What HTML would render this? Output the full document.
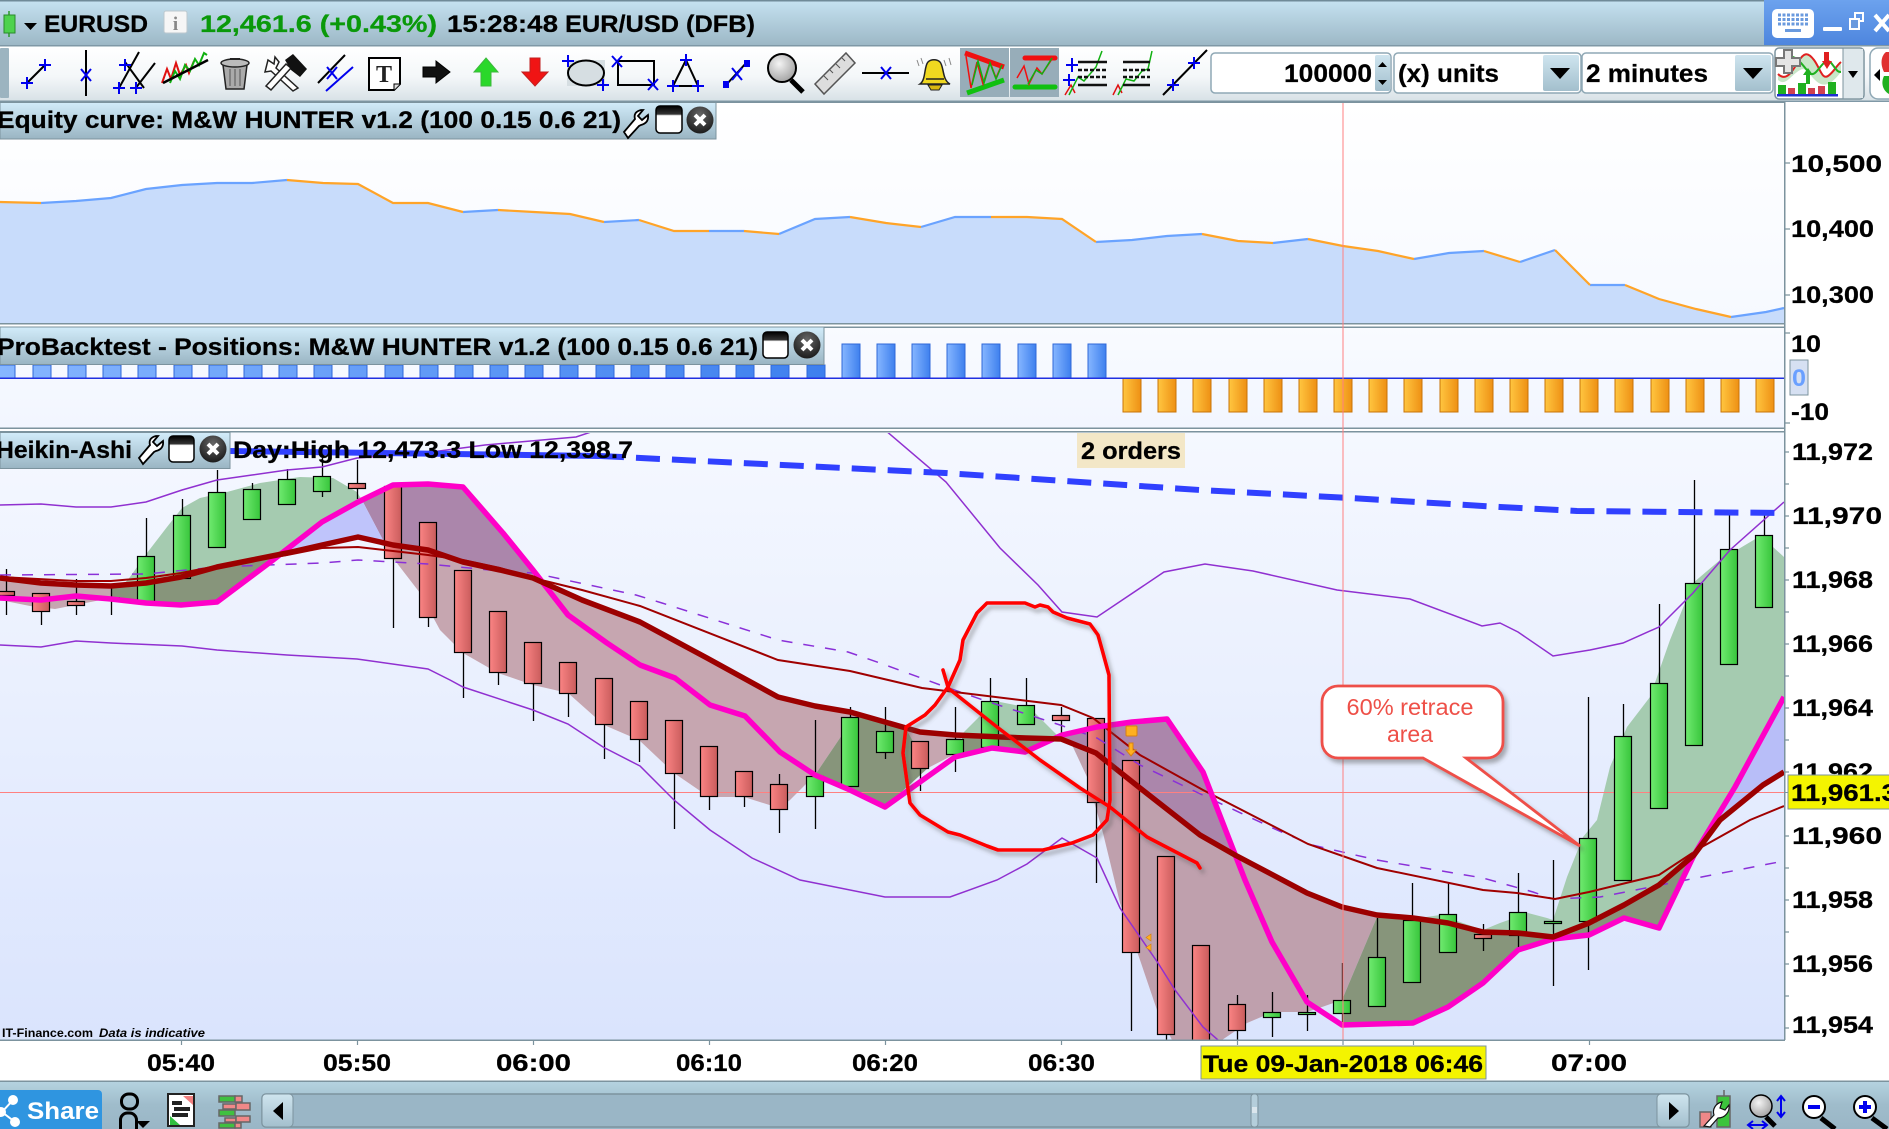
<!DOCTYPE html>
<html lang="en">
<head>
<meta charset="utf-8">
<title>EURUSD chart</title>
<style>
html,body{margin:0;padding:0;background:#fff;width:1889px;height:1129px;overflow:hidden}
svg{display:block}
text{font-family:"Liberation Sans",Arial,sans-serif}
.b{font-weight:bold;font-size:24px;fill:#000;stroke:#000;stroke-width:.25}
.ax{font-weight:bold;font-size:24px;fill:#000;stroke:#000;stroke-width:.25}
.bl{stroke:#0000ee;stroke-width:2;fill:none}
.k{stroke:#000;stroke-width:2;fill:none}
</style>
</head>
<body>
<svg width="1889" height="1129" viewBox="0 0 1889 1129" xmlns="http://www.w3.org/2000/svg">
<defs>
<linearGradient id="hd" x1="0" y1="0" x2="0" y2="1"><stop offset="0" stop-color="#c5e2f1"/><stop offset="1" stop-color="#9cb7c5"/></linearGradient>
<linearGradient id="tb" x1="0" y1="0" x2="0" y2="1"><stop offset="0" stop-color="#ffffff"/><stop offset=".55" stop-color="#f4f7f9"/><stop offset="1" stop-color="#d7e1e6"/></linearGradient>
<linearGradient id="tt" x1="0" y1="0" x2="0" y2="1"><stop offset="0" stop-color="#d2ecfa"/><stop offset="1" stop-color="#9ab5c3"/></linearGradient>
<linearGradient id="eq" x1="0" y1="0" x2="0" y2="1"><stop offset="0" stop-color="#ffffff"/><stop offset="1" stop-color="#f6f9ff"/></linearGradient>
<linearGradient id="bt" x1="0" y1="0" x2="0" y2="1"><stop offset="0" stop-color="#f9fbff"/><stop offset="1" stop-color="#f2f6ff"/></linearGradient>
<linearGradient id="ha" x1="0" y1="0" x2="0" y2="1"><stop offset="0" stop-color="#f5f8ff"/><stop offset="1" stop-color="#dae4fd"/></linearGradient>
<linearGradient id="rd"><stop offset="0" stop-color="#fb8484"/><stop offset="1" stop-color="#c95c5c"/></linearGradient>
<linearGradient id="gn"><stop offset="0" stop-color="#70ea70"/><stop offset="1" stop-color="#38c63c"/></linearGradient>
<linearGradient id="bb"><stop offset="0" stop-color="#86b6ff"/><stop offset="1" stop-color="#3e80ee"/></linearGradient>
<linearGradient id="ob"><stop offset="0" stop-color="#ffc640"/><stop offset="1" stop-color="#ee9014"/></linearGradient>
<linearGradient id="bot" x1="0" y1="0" x2="0" y2="1"><stop offset="0" stop-color="#b5d3e0"/><stop offset=".5" stop-color="#9fbccb"/><stop offset="1" stop-color="#9ab6c6"/></linearGradient>
<linearGradient id="btn" x1="0" y1="0" x2="0" y2="1"><stop offset="0" stop-color="#cfe5ef"/><stop offset="1" stop-color="#a3bfcd"/></linearGradient>
<linearGradient id="blu" x1="0" y1="0" x2="0" y2="1"><stop offset="0" stop-color="#6ca2ee"/><stop offset="1" stop-color="#4e86de"/></linearGradient>
<linearGradient id="wn" x1="0" y1="0" x2="0" y2="1"><stop offset="0" stop-color="#000"/><stop offset=".3" stop-color="#333"/><stop offset=".36" stop-color="#fff"/><stop offset="1" stop-color="#fff"/></linearGradient>
<radialGradient id="cl" cx=".5" cy=".3" r=".8"><stop offset="0" stop-color="#666"/><stop offset="1" stop-color="#111"/></radialGradient>
<radialGradient id="lens" cx=".4" cy=".35" r=".75"><stop offset="0" stop-color="#f4f4f4"/><stop offset="1" stop-color="#999"/></radialGradient>
<clipPath id="cp"><rect x="0" y="433" width="1784" height="607"/></clipPath>
<filter id="sh" x="-10%" y="-10%" width="125%" height="125%"><feDropShadow dx="3" dy="4" stdDeviation="2" flood-color="#555" flood-opacity=".45"/></filter>
</defs>

<!-- header -->
<rect width="1889" height="46" fill="url(#hd)"/>
<rect width="1889" height="1.5" fill="#6f8a98"/>
<rect y="45" width="1889" height="1.5" fill="#7f98a6"/>
<path d="M9 11V37" stroke="#2a9a2a" stroke-width="1.5"/>
<rect x="4" y="15" width="11" height="18" fill="#4ed24e" stroke="#2a8a2a"/>
<path d="M24 23h13l-6.500 7z" fill="#000"/>
<text class="b" x="44" y="32" textLength="104" lengthAdjust="spacingAndGlyphs">EURUSD</text>
<rect x="164" y="11" width="23" height="22" rx="2" fill="#f6f6f6" stroke="#bcc8ce"/>
<text x="175.500" y="30" text-anchor="middle" style="font:bold 19px 'Liberation Serif',serif" fill="#888">i</text>
<text class="b" x="200" y="32" textLength="237" lengthAdjust="spacingAndGlyphs" style="fill:#0a990a;stroke:#0a990a">12,461.6 (+0.43%)</text>
<text class="b" x="447" y="32" textLength="111" lengthAdjust="spacingAndGlyphs">15:28:48</text>
<text class="b" x="565" y="32" textLength="190" lengthAdjust="spacingAndGlyphs">EUR/USD (DFB)</text>
<rect x="1764" y="0" width="125" height="45" fill="url(#blu)"/>
<rect x="1772" y="9" width="42" height="29" rx="5" fill="#fff"/>
<path d="M1778 15h30M1778 19.500h30M1778 24h30" stroke="#6a9ade" stroke-width="3" stroke-dasharray="3 1.500"/>
<rect x="1785" y="29" width="16" height="3" fill="#6a9ade"/>
<rect x="1823" y="27" width="19" height="4" rx="1" fill="#fff"/>
<rect x="1855" y="13" width="8" height="8" fill="none" stroke="#fff" stroke-width="2"/>
<rect x="1850" y="19" width="9" height="10" fill="#6a9ade" stroke="#fff" stroke-width="2"/>
<path d="M1875 15l14 16M1889 15l-14 16" stroke="#fff" stroke-width="4"/>

<!-- toolbar -->
<rect y="46.500" width="1889" height="55" fill="url(#tb)"/>
<rect y="100.500" width="1889" height="1.500" fill="#7f98a6"/>
<rect x="0" y="48" width="9" height="50" rx="1" fill="#9cb4c0"/>
<!-- 1 -->
<path class="k" d="M27 83L45 65"/><path class="bl" d="M21 83h12M27 77v12M39 65h12M45 59v12"/>
<!-- 2 -->
<path class="k" d="M86 50V96"/><path class="bl" d="M81 69l10 12M91 69l-10 12"/>
<!-- 3 -->
<path class="k" d="M139 52L119 88M155 63L135 89M125 62L144 88"/><path class="bl" d="M119 65h12M125 59v12M113 88h12M119 82v12M130 88h12M136 82v12"/>
<!-- 4 -->
<path d="M162 83l5-14 4 10 5-16 4 12 6-10 3 8 5-12" stroke="#e01010" stroke-width="2" fill="none"/>
<path d="M170 83l5-12 5 8 5-14 5 6 5-12 4 6 5-12 3 2" stroke="#10b010" stroke-width="2" fill="none"/>
<path d="M163 83L208 60" stroke="#000" stroke-width="2.500"/>
<!-- 5 trash -->
<path d="M223 65h24l-3 24h-18z" fill="#aaa" stroke="#222" stroke-width="1.500"/>
<ellipse cx="235" cy="63" rx="14" ry="4" fill="#bbb" stroke="#222" stroke-width="1.500"/>
<path d="M230 59h10" stroke="#222" stroke-width="2"/>
<path d="M230 69v17M235 69v17M240 69v17" stroke="#555"/>
<!-- 6 tools -->
<path d="M268 60l6 4 1-7 4 5-3 6 22 20-5 3-22-20-6 1z" fill="#fff" stroke="#222" stroke-width="1.500"/>
<path d="M266 86l20-22 5 4-20 22z" fill="#fff" stroke="#222" stroke-width="1.500"/>
<path d="M285 60l8-6 14 15-7 8-9-7z" fill="#111"/>
<!-- 7 -->
<path class="k" d="M345 55L318 83"/><path d="M353 67L326 91" stroke="#0000ee" stroke-width="2"/><path class="bl" d="M327 67l10 12M337 67l-10 12"/>
<!-- 8 T -->
<path d="M369 58h31v26l-6 6h-25z" fill="#fff" stroke="#000" stroke-width="2"/>
<path d="M394 90v-6h6" fill="#ddd" stroke="#000"/>
<text x="384" y="82" text-anchor="middle" style="font:bold 24px 'Liberation Serif',serif" fill="#222">T</text>
<!-- 9-11 arrows -->
<path d="M423 67h13v-6l14 11-14 11v-6h-13z" fill="#111" stroke="#000"/>
<path d="M486 58l12 14h-7v14h-10V72h-7z" fill="#2ad82a" stroke="#3cb83c"/>
<path d="M535 86l13-14h-8V58h-10v14h-8z" fill="#f01414" stroke="#c02020"/>
<!-- 12 -->
<rect x="567" y="60" width="38" height="26" fill="#d6dee2"/>
<ellipse cx="586" cy="73" rx="18" ry="12.500" fill="none" stroke="#000" stroke-width="2"/>
<path class="bl" d="M562 61h12M568 55v12M597 85h12M603 79v12"/>
<!-- 13 -->
<rect x="618" y="61" width="36" height="24" fill="none" stroke="#000" stroke-width="2"/>
<path class="bl" d="M612 56l10 11M622 56l-10 11M648 79l10 11M658 79l-10 11"/>
<!-- 14 -->
<path class="k" d="M686 60L673 86H698Z"/><path class="bl" d="M680 60h12M686 54v12M667 86h12M673 80v12M692 86h12M698 80v12"/>
<!-- 15 -->
<path class="k" d="M726 85L747 62"/><rect x="723" y="81" width="6" height="7" fill="#0000ee"/><rect x="744" y="60" width="6" height="7" fill="#0000ee"/><path class="bl" d="M732 68l10 12M742 68l-10 12"/>
<!-- 16 magnifier -->
<path d="M791 80L803 92" stroke="#000" stroke-width="5"/>
<circle cx="782" cy="68" r="14" fill="url(#lens)" stroke="#000" stroke-width="2"/>
<!-- 17 ruler -->
<path d="M846 53l9 10-31 31-9-10z" fill="#ddd" stroke="#555" stroke-width="1.500"/>
<path d="M842 58l3 3M836 64l4 4M830 70l3 3M824 76l4 4" stroke="#555"/>
<!-- 18 -->
<path class="k" d="M862 73H909"/><path class="bl" d="M881 67l10 12M891 67l-10 12"/>
<!-- 19 bell -->
<path d="M920 84c6-4 4-18 8-22 3-3 9-3 12 0 4 4 2 18 10 22z" fill="#f0d820" stroke="#222" stroke-width="1.500"/>
<path d="M928 85h14l-3 5h-8z" fill="#d8b810" stroke="#222"/>
<path d="M926 79h18" stroke="#222" stroke-width="1.500"/>
<path d="M917 60l2 6M921 58l2 6M944 60l2 6M949 58l2 7" stroke="#888"/>
<!-- 20, 21 -->
<rect x="960" y="48" width="49" height="49" fill="#97adb9"/>
<path d="M965 53L1004 67" stroke="#f01010" stroke-width="5"/>
<path d="M967 93L1004 80" stroke="#10c010" stroke-width="5"/>
<path d="M966 56l5 32 6-26 6 22 7-22 6 16 6-14" stroke="#f01010" stroke-width="1.500" fill="none"/>
<path d="M972 85l6-24 6 22 6-20 6 16 6-14" stroke="#10b010" stroke-width="1.500" fill="none"/>
<rect x="1010" y="48" width="49" height="49" fill="#97adb9"/>
<path d="M1025 58h30" stroke="#f01010" stroke-width="5" stroke-linecap="round"/>
<path d="M1015 87h40" stroke="#10c010" stroke-width="5" stroke-linecap="round"/>
<path d="M1017 78l7-12 5 18 8-16 5 6 12-18" stroke="#f01010" stroke-width="1.500" fill="none"/>
<path d="M1028 84l8-14 6 4 10-16" stroke="#10b010" stroke-width="1.500" fill="none"/>
<!-- 22, 23 -->
<path d="M1065 95l6-10 4 8" stroke="#e01010" stroke-width="1.500" fill="none"/>
<path d="M1069 95l9-18 6 4 12-14 6-16" stroke="#10b010" stroke-width="1.500" fill="none"/>
<path d="M1078 62h29M1078 85h29" stroke="#111" stroke-width="2.500"/>
<path d="M1078 70h29M1078 77h29" stroke="#111" stroke-width="2.500" stroke-dasharray="4 2"/>
<path class="bl" d="M1066 65h12M1072 58v14M1063 80h12M1069 74v12"/>
<path d="M1113 95l5-10 4 8" stroke="#e01010" stroke-width="1.500" fill="none"/>
<path d="M1118 95l8-16 8 2 8-10 6-2 4-18" stroke="#10b010" stroke-width="1.500" fill="none"/>
<path d="M1123 62h27M1123 85h27" stroke="#111" stroke-width="2.500"/>
<path d="M1123 70h27M1123 77h27" stroke="#111" stroke-width="2.500" stroke-dasharray="4 2"/>
<!-- 24 -->
<path class="k" d="M1163 95L1207 50"/><path class="bl" d="M1188 63h12M1194 57v12M1167 85h12M1173 79v12"/>
<!-- inputs -->
<rect x="1211" y="53" width="180" height="40" rx="4" fill="#fff" stroke="#8fa8b5" stroke-width="1.500"/>
<text class="b" x="1284" y="82" textLength="88" lengthAdjust="spacingAndGlyphs" style="font-size:25px">100000</text>
<rect x="1375" y="55" width="15" height="36" rx="2" fill="url(#btn)"/>
<path d="M1378 67l4.500-5 4.500 5zM1378 80l4.500 5 4.500-5z" fill="#000"/>
<rect x="1394" y="53" width="187" height="40" rx="4" fill="#fff" stroke="#8fa8b5" stroke-width="1.500"/>
<text class="b" x="1398" y="82" textLength="101" lengthAdjust="spacingAndGlyphs" style="font-size:25px">(x) units</text>
<rect x="1543" y="55" width="36" height="36" rx="2" fill="url(#btn)"/>
<path d="M1550 68h20l-10 11z" fill="#000"/>
<rect x="1582" y="53" width="191" height="40" rx="4" fill="#fff" stroke="#8fa8b5" stroke-width="1.500"/>
<text class="b" x="1586" y="82" textLength="122" lengthAdjust="spacingAndGlyphs" style="font-size:25px">2 minutes</text>
<rect x="1735" y="55" width="36" height="36" rx="2" fill="url(#btn)"/>
<path d="M1743 68h20l-10 11z" fill="#000"/>
<!-- indicator icon -->
<rect x="1775" y="48" width="89" height="51" rx="4" fill="#fff" stroke="#7c939e" stroke-width="1.500"/>
<rect x="1843" y="49" width="20" height="49" fill="#dfe8ec"/>
<path d="M1843 48.500v50" stroke="#7c939e"/>
<path d="M1778 74c8 8 14-2 20-12s10-10 16-2 8 20 14 16 8-10 13-14v10c-8 10-16 18-26 8s-10-14-18-8-12 14-19 8z" fill="#c8e6c8"/>
<path d="M1778 74c8 8 14-2 20-12s10-10 16-2 8 20 14 16 8-10 13-14" stroke="#e02020" stroke-width="2" fill="none"/>
<path d="M1778 66c8-12 14-12 22-4s10 16 16 10 10-16 16-8 6 8 9 8" stroke="#20b020" stroke-width="2" fill="none"/>
<path d="M1784 50h8v8h8v8h-8v7h-8v-7h-8v-8h8z" fill="#e4e4e4" stroke="#777" stroke-width="2"/>
<path d="M1808 68l5 7h-3v9h-4v-9h-3z" fill="#20b020"/>
<path d="M1824 52h5v9h3l-5 8-5-8h2z" fill="#e02020"/>
<rect x="1778" y="85" width="8" height="9" fill="#20b020"/><rect x="1788" y="88" width="7" height="6" fill="#d04050"/><rect x="1798" y="83" width="8" height="11" fill="#20b020"/><rect x="1808" y="88" width="7" height="6" fill="#d04050"/><rect x="1818" y="86" width="7" height="8" fill="#d04050"/><rect x="1828" y="82" width="8" height="12" fill="#20b020"/>
<rect x="1777" y="94" width="61" height="2.500" fill="#2030d0"/>
<path d="M1848 71h10l-5 7z" fill="#000"/>
<rect x="1870" y="48" width="30" height="51" rx="8" fill="#fff" stroke="#8fa8b5" stroke-width="1.500"/>
<path d="M1874 75l6-6v12z" fill="#000"/>
<path d="M1886 52c-5 4-6 12-2 20h5V52z" fill="#e03030"/><path d="M1884 76c-3 6-2 14 5 18V76z" fill="#20b020"/>

<!-- Equity panel -->
<rect x="0" y="102" width="1784" height="222" fill="url(#eq)"/>
<path fill="#c8dcfb" d="M0 202L41 203 76 201 111 198 146 189 182 185 217 183 252 183 287 180 323 183 358 184 393 203 428 203 463 212 498 210 534 212 570 214 604 222 639 220 674 231 709 231 744 231 779 234 815 219 850 217 886 223 921 227 955 217 991 217 1027 217 1062 219 1096 242 1132 240 1167 236 1202 234 1238 241 1273 243 1308 239 1343 246 1378 251 1414 259 1449 253 1484 251 1520 262 1555 250 1590 285 1625 285 1659 299 1696 309 1731 317 1766 312 1784 308V324H0Z"/>
<path fill="none" stroke="#6aa3ff" stroke-width="2.200" d="M41 203L76 201 111 198 146 189 182 185 217 183 252 183 287 180M463 212L498 210M604 222L639 220M709 231L744 231M779 234L815 219 850 217M921 227L955 217 991 217M1096 242L1132 240 1167 236 1202 234M1273 243L1308 239M1414 259L1449 253 1484 251M1520 262L1555 250M1590 285L1625 285M1731 317L1766 312 1784 308"/>
<path fill="none" stroke="#ffa428" stroke-width="2.200" d="M0 202L41 203M287 180L323 183 358 184 393 203 428 203 463 212M498 210L534 212 570 214 604 222M639 220L674 231 709 231M744 231L779 234M850 217L886 223 921 227M991 217L1027 217 1062 219 1096 242M1202 234L1238 241 1273 243M1308 239L1343 246 1378 251 1414 259M1484 251L1520 262M1555 250L1590 285M1625 285L1659 299 1696 309 1731 317"/>
<rect x="0" y="323" width="1785" height="1.500" fill="#7c939e"/>
<rect x="0" y="102" width="716" height="37" fill="url(#tt)" stroke="#7c939e"/>
<text class="b" x="-3" y="128" textLength="624" lengthAdjust="spacingAndGlyphs">Equity curve: M&amp;W HUNTER v1.2 (100 0.15 0.6 21)</text>
<g transform="translate(485,-326)"><path d="M139 458L150 445Q148 438 156 436L158 436 153 442 157 446 163 441Q164 449 156 451L154 452 143 464Z" fill="#fff" stroke="#000" stroke-width="1.800"/></g>
<rect x="656" y="106" width="26" height="27" rx="4" fill="url(#wn)" stroke="#000" stroke-width="1.500"/>
<circle cx="700" cy="120" r="13.500" fill="url(#cl)"/><path d="M695 115l10 10M705 115l-10 10" stroke="#fff" stroke-width="4"/>

<!-- Backtest panel -->
<rect x="0" y="327" width="1784" height="101" fill="url(#bt)"/>
<rect x="0" y="326.500" width="1785" height="1.500" fill="#7c939e"/>
<rect x="0" y="427.500" width="1785" height="1.500" fill="#7c939e"/>
<g fill="url(#bb)" stroke="#2f68d8">
<path d="M-3 365h18v13H-3zM33 365h18v13H33zM68 365h18v13H68zM103 365h18v13h-18zM138 365h18v13h-18zM174 365h18v13h-18zM209 365h18v13h-18zM244 365h18v13h-18zM279 365h18v13h-18zM314 365h18v13h-18zM349 365h18v13h-18zM385 365h18v13h-18zM420 365h18v13h-18zM455 365h18v13h-18zM490 365h18v13h-18zM525 365h18v13h-18zM560 365h18v13h-18zM596 365h18v13h-18zM631 365h18v13h-18zM666 365h18v13h-18zM701 365h18v13h-18zM736 365h18v13h-18zM771 365h18v13h-18zM807 365h18v13h-18z"/>
<rect x="842" y="344" width="18" height="34"/><rect x="877" y="344" width="18" height="34"/><rect x="912" y="344" width="18" height="34"/><rect x="947" y="344" width="18" height="34"/><rect x="982" y="344" width="18" height="34"/><rect x="1018" y="344" width="18" height="34"/><rect x="1053" y="344" width="18" height="34"/><rect x="1088" y="344" width="18" height="34"/>
</g>
<g fill="url(#ob)" stroke="#c87408">
<rect x="1123" y="378" width="18" height="34"/><rect x="1158" y="378" width="18" height="34"/><rect x="1193" y="378" width="18" height="34"/><rect x="1229" y="378" width="18" height="34"/><rect x="1264" y="378" width="18" height="34"/><rect x="1299" y="378" width="18" height="34"/><rect x="1334" y="378" width="18" height="34"/><rect x="1369" y="378" width="18" height="34"/><rect x="1404" y="378" width="18" height="34"/><rect x="1440" y="378" width="18" height="34"/><rect x="1475" y="378" width="18" height="34"/><rect x="1510" y="378" width="18" height="34"/><rect x="1545" y="378" width="18" height="34"/><rect x="1580" y="378" width="18" height="34"/><rect x="1615" y="378" width="18" height="34"/><rect x="1651" y="378" width="18" height="34"/><rect x="1686" y="378" width="18" height="34"/><rect x="1721" y="378" width="18" height="34"/><rect x="1756" y="378" width="18" height="34"/>
</g>
<rect x="0" y="377.500" width="1784" height="1.500" fill="#2030e0"/>
<rect x="0" y="327" width="824" height="37.500" fill="url(#tt)" stroke="#7c939e"/>
<text class="b" x="-3" y="355" textLength="761" lengthAdjust="spacingAndGlyphs">ProBacktest - Positions: M&amp;W HUNTER v1.2 (100 0.15 0.6 21)</text>
<rect x="763" y="332" width="25" height="26" rx="4" fill="url(#wn)" stroke="#000" stroke-width="1.500"/>
<circle cx="807" cy="345" r="13.500" fill="url(#cl)"/><path d="M802 340l10 10M812 340l-10 10" stroke="#fff" stroke-width="4"/>

<!-- Heikin panel -->
<rect x="0" y="432" width="1784" height="608" fill="url(#ha)"/>
<g clip-path="url(#cp)">
<!-- red fills -->
<path fill="#c6a6b0" d="M0 579L41 583 76 585 111 586V598L55 609 30 606 0 600Z"/>
<path fill="#c6a6b0" d="M383 541L393 545 428 550 463 562 500 570 533 578 582 600 640 622 707 658 778 697 815 706 850 712 860 716 842 735 815 775 790 800 779 808 744 797 709 797 674 773 639 740 604 725 568 693 533 685 498 673 463 653 440 630 420 593 393 558Z"/>
<path fill="#c6a6b0" d="M905 727L920 732 963 734 953 755 928 768Z"/>
<path fill="#bfa0ad" d="M1072 745L1096 753 1140 788 1200 835 1235 855 1273 875 1307 893 1342 907 1377 917 1342 1000 1322 1007 1307 1012 1273 1012 1247 1023 1222 1040 1172 1040 1157 1010 1140 960 1120 903 1103 833 1087 777Z"/>
<!-- light green -->
<path fill="#a5cbb0" d="M112 598L130 577 147 553 167 527 182 508 200 498 227 492 260 483 300 477 333 478 357 492 363 502 322 522 276 556 252 560 217 567 181 577 146 583 111 586Z"/>
<path fill="#a5cbb0" d="M962 734L983 713 1000 702 1030 708 1057 735 1061 739 1026 738 990 737Z"/>
<path fill="#a5cbb0" d="M1413 919L1440 915 1483 930 1500 923 1528 913 1547 918 1553 920 1567 877 1583 837 1597 820 1610 767 1627 727 1650 697 1670 640 1693 583 1720 560 1757 538 1773 547 1784 557V697L1735 787 1700 848 1659 885 1624 905 1589 923 1553 937 1518 933 1483 932 1448 923Z"/>
<!-- dark green -->
<path fill="#87957b" d="M111 586L146 583 181 577 217 567 252 560 276 556 217 602 181 605 146 603 111 599Z"/>
<path fill="#87957b" d="M815 775L842 735 860 716 885 722 905 727 928 768 885 807 850 790Z"/>
<path fill="#87957b" d="M963 735L1026 738 1061 739 1062 735 1025 752 992 748 955 757Z"/>
<path fill="#87957b" d="M1377 917L1413 918 1448 923 1483 932 1518 933 1553 937 1589 923 1624 905 1659 885 1700 848 1659 928 1624 918 1589 935 1553 939 1518 950 1483 983 1448 1007 1413 1023 1342 1025 1342 1000Z"/>
<!-- purple & blue -->
<path fill="#ab86ab" d="M363 502L393 485 428 484 463 487 503 533 533 570 533 578 500 570 463 562 428 550 393 545 383 540Z"/>
<path fill="#ab86ab" d="M1062 735L1097 727 1132 722 1167 719 1203 772 1236 855 1200 835 1140 788 1096 753 1061 739Z"/>
<path fill="#bfc4fb" d="M276 556L322 522 363 502 383 540 358 537 322 545Z"/>
<path fill="#b8bef8" d="M1700 848L1735 787 1784 697V772L1763 785 1720 820Z"/>

<!-- crosshair -->
<path d="M0 792.500H1784" stroke="#ff8080" stroke-width="1"/>

<!-- wicks -->
<path stroke="#000" stroke-width="1.300" fill="none" d="M6.500 569V615M41.500 611V625M76.500 579V615M111.500 588V615M146.500 518V556M182.500 499V515M217.500 470V492M252.500 483V489M287.500 469V479M322.500 458V497M357.500 460V499M393.500 558V628M428.500 617V627M463.500 652V698M498.500 672V685M533.500 683V721M568.500 693V717M604.500 724V759M639.500 739V762M674.500 773V829M709.500 796V810M744.500 796V807M779.500 774V833M815.500 720V829M850.500 707V717M885.500 707V759M920.500 768V791M955.500 707V772M990.500 678V701M1026.500 678V705M1061.500 707V734M1096.500 802V883M1131.500 952V1031M1166.500 1034V1040M1237.500 995V1040M1272.500 992V1037M1307.500 995V1031M1342.500 963V1026M1377.500 918V957M1412.500 883V920M1448.500 883V914M1483.500 924V951M1518.500 873V948M1553.500 860V986M1588.500 697V970M1623.500 704V736M1659.500 604V683M1694.500 480V583M1729.500 515V549M1764.500 512V535"/>
<!-- red bodies -->
<g fill="url(#rd)" stroke="#000" stroke-width="1.200">
<rect x="-2.500" y="591.500" width="17" height="4"/><rect x="32.500" y="593.500" width="17" height="18"/><rect x="67.500" y="601.500" width="17" height="4"/><rect x="348.500" y="483.500" width="17" height="5"/><rect x="384.500" y="486.500" width="17" height="72"/><rect x="419.500" y="522.500" width="17" height="95"/><rect x="454.500" y="570.500" width="17" height="82"/><rect x="489.500" y="611.500" width="17" height="61"/><rect x="524.500" y="642.500" width="17" height="41"/><rect x="559.500" y="662.500" width="17" height="31"/><rect x="595.500" y="678.500" width="17" height="46"/><rect x="630.500" y="701.500" width="17" height="38"/><rect x="665.500" y="720.500" width="17" height="53"/><rect x="700.500" y="746.500" width="17" height="50"/><rect x="735.500" y="771.500" width="17" height="25"/><rect x="770.500" y="784.500" width="17" height="25"/><rect x="911.500" y="741.500" width="17" height="27"/><rect x="1052.500" y="715.500" width="17" height="5"/><rect x="1087.500" y="718.500" width="17" height="84"/><rect x="1122.500" y="760.500" width="17" height="192"/><rect x="1157.500" y="856.500" width="17" height="178"/><rect x="1192.500" y="945.500" width="17" height="100"/><rect x="1228.500" y="1004.500" width="17" height="26"/><rect x="1474.500" y="934.500" width="17" height="4"/>
</g>
<path d="M103 598h17" stroke="#000" stroke-width="1.500"/>
<!-- green bodies -->
<g fill="url(#gn)" stroke="#000" stroke-width="1.200">
<rect x="137.500" y="556.500" width="17" height="45"/><rect x="173.500" y="515.500" width="17" height="63"/><rect x="208.500" y="492.500" width="17" height="55"/><rect x="243.500" y="489.500" width="17" height="30"/><rect x="278.500" y="479.500" width="17" height="25"/><rect x="313.500" y="476.500" width="17" height="15"/><rect x="806.500" y="776.500" width="17" height="20"/><rect x="841.500" y="717.500" width="17" height="69"/><rect x="876.500" y="731.500" width="17" height="21"/><rect x="946.500" y="739.500" width="17" height="15"/><rect x="981.500" y="701.500" width="17" height="46"/><rect x="1017.500" y="705.500" width="17" height="19"/><rect x="1263.500" y="1012.500" width="17" height="5"/><rect x="1298.500" y="1012.500" width="17" height="2"/><rect x="1333.500" y="1000.500" width="17" height="13"/><rect x="1368.500" y="957.500" width="17" height="49"/><rect x="1403.500" y="920.500" width="17" height="62"/><rect x="1439.500" y="914.500" width="17" height="38"/><rect x="1509.500" y="912.500" width="17" height="23"/><rect x="1544.500" y="921.500" width="17" height="2"/><rect x="1579.500" y="838.500" width="17" height="83"/><rect x="1614.500" y="736.500" width="17" height="144"/><rect x="1650.500" y="683.500" width="17" height="125"/><rect x="1685.500" y="583.500" width="17" height="162"/><rect x="1720.500" y="549.500" width="17" height="115"/><rect x="1755.500" y="535.500" width="17" height="72"/>
</g>

<!-- thin purple bands -->
<g fill="none" stroke="#9030d0" stroke-width="1.500">
<path d="M0 505L41 504 76 507 111 507 146 502 182 490 217 480 252 475 287 470 322 467 357 458 424 453 485 445 576 437 594 431"/>
<path d="M885 430L946 482 1000 548 1038 585 1062 612 1097 617 1164 572 1205 564 1253 571 1337 590 1410 599 1482 626 1500 623 1518 632 1553 656 1590 650 1623 643 1659 627 1693 593 1730 550 1784 502"/>
<path d="M0 645L41 647 76 641 111 643 182 646 217 650 287 655 357 659 428 669 450 680 463 687 533 710 568 724 603 747 640 766 674 800 710 830 752 858 800 880 885 897 950 897 997 880 1027 864 1062 838 1097 858 1120 908 1158 963 1175 990 1203 1027 1218 1040"/>
</g>
<!-- dashed purple -->
<path fill="none" stroke="#8a30d8" stroke-width="1.500" stroke-dasharray="11 11" d="M0 575L146 574 217 567 322 563 358 560 428 564 500 571 533 573 636 595 662 603 778 640 848 652 880 663 943 686 983 700 1060 725 1097 738 1140 765 1213 800 1277 830 1312 845 1377 860 1483 878 1533 892 1553 899 1600 897 1686 880 1784 861"/>
<!-- blue dashed -->
<path fill="none" stroke="#3040ff" stroke-width="6" d="M230 451L600 456"/>
<path fill="none" stroke="#3040ff" stroke-width="6" stroke-dasharray="24 12" d="M600 456L945 473 1200 490 1350 498 1500 507 1577 511 1783 513"/>
<!-- thin dark red -->
<path fill="none" stroke="#a00000" stroke-width="2" d="M0 577L76 581 111 581 146 578 181 573 217 566 252 561 287 555 322 548 358 547 393 551 428 555 463 560 500 568 533 578 582 590 640 606 778 660 850 671 922 688 1061 705 1093 718 1140 755 1203 790 1308 844 1377 868 1483 890 1517 893 1555 899 1589 892 1659 875 1700 848 1750 820 1784 806"/>
<!-- magenta -->
<path fill="none" stroke="#ff00c8" stroke-width="5.500" stroke-linejoin="round" d="M0 598L41 600 76 596 111 599 146 603 181 605 217 602 273 560 322 522 358 502 393 485 428 484 463 487 503 533 533 570 568 615 607 643 640 665 675 678 710 705 745 716 780 752 815 775 850 790 885 807 955 757 992 748 1025 752 1062 735 1097 727 1132 722 1167 719 1203 772 1245 880 1272 942 1307 1002 1342 1025 1413 1023 1448 1007 1483 983 1518 950 1553 939 1589 935 1624 918 1659 928 1694 855 1735 787 1784 697"/>
<!-- thick dark red -->
<path fill="none" stroke="#9c0000" stroke-width="5.500" stroke-linejoin="round" d="M0 578L41 583 76 585 111 586 146 583 181 577 217 567 252 560 287 553 322 545 358 537 393 545 428 550 463 562 500 570 533 578 582 600 640 622 707 658 778 697 815 706 850 712 885 722 920 732 955 735 1026 738 1061 739 1096 753 1140 788 1200 835 1235 855 1273 875 1307 893 1342 907 1377 915 1413 918 1448 923 1483 932 1518 933 1553 937 1589 923 1624 905 1659 885 1694 855 1720 820 1763 785 1784 772"/>
<!-- markers -->
<rect x="1126" y="726" width="11" height="10" rx="1" fill="#ffb020" stroke="#d88010"/>
<path d="M1129 743h4v7h3l-5 6-5-6h3z" fill="#ffb020" stroke="#d88010"/>
<path d="M1151 934v7l-5-3.500zM1151 944v7l-5-3.500z" fill="#ffb020" stroke="#d88010" stroke-width=".7"/>
</g>
<rect x="0" y="431" width="1785" height="1.500" fill="#7c939e"/>
<rect x="1342.500" y="102" width="1" height="938" fill="#ff8080"/>
<rect x="1077" y="433" width="108" height="35" fill="#f3e7c7"/>
<text class="b" x="1081" y="459" textLength="100" lengthAdjust="spacingAndGlyphs">2 orders</text>

<!-- annotations -->
<g filter="url(#sh)" fill="none" stroke="#ff0000" stroke-width="3.600" stroke-linejoin="round" stroke-linecap="round">
<path d="M943 670L948 687 960 660 963 640 977 613 987 603 1025 603 1035 607 1040 605 1048 607 1053 612 1067 618 1090 624 1098 635 1103 653 1109 675 1110 800 1107 820 1093 835 1072 843 1043 850 998 850 987 846 960 835 948 832 920 815 910 803 903 753 906 727 925 715 935 705 948 687"/>
<path d="M948 688L997 727 1040 760 1080 788 1110 807 1147 837 1197 863 1200 868"/>
</g>
<g filter="url(#sh)">
<path d="M1338 686H1487A16 16 0 0 1 1503 702V742A16 16 0 0 1 1487 758H1466L1580 846 1423 758H1338A16 16 0 0 1 1322 742V702A16 16 0 0 1 1338 686Z" fill="#fff" stroke="#ee5048" stroke-width="2.800"/>
</g>
<text x="1410" y="715" text-anchor="middle" textLength="127" lengthAdjust="spacingAndGlyphs" style="font-size:23px" fill="#ee5048">60% retrace</text>
<text x="1410" y="742" text-anchor="middle" style="font-size:23px" fill="#ee5048">area</text>

<!-- Heikin title -->
<rect x="0" y="432.500" width="230" height="36" fill="url(#tt)" stroke="#7c939e"/>
<text class="b" x="-4" y="458" textLength="136" lengthAdjust="spacingAndGlyphs">Heikin-Ashi</text>
<path d="M139 458L150 445Q148 438 156 436L158 436 153 442 157 446 163 441Q164 449 156 451L154 452 143 464Z" fill="#fff" stroke="#000" stroke-width="1.800"/>
<rect x="169" y="436" width="25" height="26" rx="4" fill="url(#wn)" stroke="#000" stroke-width="1.500"/>
<circle cx="213" cy="449" r="13.500" fill="url(#cl)"/><path d="M208 444l10 10M218 444l-10 10" stroke="#fff" stroke-width="4"/>
<text class="b" x="233" y="458" textLength="400" lengthAdjust="spacingAndGlyphs">Day:High 12,473.3 Low 12,398.7</text>
<text x="2" y="1037" textLength="91" lengthAdjust="spacingAndGlyphs" style="font-weight:bold;font-size:12px" fill="#000">IT-Finance.com</text>
<text x="99" y="1037" textLength="106" lengthAdjust="spacingAndGlyphs" style="font-weight:bold;font-style:italic;font-size:12px" fill="#000">Data is indicative</text>

<!-- right axis -->
<rect x="1784" y="102" width="1.500" height="938" fill="#7c939e"/>
<rect x="0" y="101.500" width="1785" height="1.500" fill="#7c939e"/>
<rect x="0" y="1039.500" width="1785" height="1.500" fill="#7c939e"/>
<path stroke="#7c939e" stroke-width="1.200" d="M1785 163h5M1785 229h5M1785 295h5M1785 333h5M1785 423h5M1785 452h4M1785 484h4M1785 516h4M1785 548h4M1785 580h4M1785 612h4M1785 644h4M1785 676h4M1785 708h4M1785 740h4M1785 772h4M1785 836h4M1785 868h4M1785 900h4M1785 932h4M1785 964h4M1785 996h4M1785 1028h4"/>
<text class="ax" x="1791" y="172" textLength="91" lengthAdjust="spacingAndGlyphs">10,500</text>
<text class="ax" x="1791" y="237" textLength="83" lengthAdjust="spacingAndGlyphs">10,400</text>
<text class="ax" x="1791" y="303" textLength="83" lengthAdjust="spacingAndGlyphs">10,300</text>
<text class="ax" x="1791" y="352" textLength="30" lengthAdjust="spacingAndGlyphs">10</text>
<rect x="1790" y="360" width="18" height="35" fill="#d6e0f2" stroke="#7c939e"/>
<text x="1792" y="386" textLength="14" lengthAdjust="spacingAndGlyphs" style="font-weight:bold;font-size:24px" fill="#6aa0ff">0</text>
<text class="ax" x="1791" y="420" textLength="38" lengthAdjust="spacingAndGlyphs">-10</text>
<text class="ax" x="1792" y="460" textLength="81" lengthAdjust="spacingAndGlyphs">11,972</text>
<text class="ax" x="1792" y="524" textLength="90" lengthAdjust="spacingAndGlyphs">11,970</text>
<text class="ax" x="1792" y="588" textLength="81" lengthAdjust="spacingAndGlyphs">11,968</text>
<text class="ax" x="1792" y="652" textLength="81" lengthAdjust="spacingAndGlyphs">11,966</text>
<text class="ax" x="1792" y="716" textLength="81" lengthAdjust="spacingAndGlyphs">11,964</text>
<text class="ax" x="1792" y="780" textLength="81" lengthAdjust="spacingAndGlyphs">11,962</text>
<text class="ax" x="1792" y="844" textLength="90" lengthAdjust="spacingAndGlyphs">11,960</text>
<text class="ax" x="1792" y="908" textLength="81" lengthAdjust="spacingAndGlyphs">11,958</text>
<text class="ax" x="1792" y="972" textLength="81" lengthAdjust="spacingAndGlyphs">11,956</text>
<text class="ax" x="1792" y="1033" textLength="81" lengthAdjust="spacingAndGlyphs">11,954</text>
<rect x="1788" y="775" width="103" height="34" fill="#f4f400" stroke="#7c939e"/>
<path d="M1785 792.500h3" stroke="#7c939e"/>
<text class="ax" x="1791" y="801" textLength="106" lengthAdjust="spacingAndGlyphs">11,961.3</text>

<!-- time axis -->
<path stroke="#7c939e" stroke-width="1.200" d="M181.500 1041v4M357.500 1041v4M533.500 1041v4M709.500 1041v4M885.500 1041v4M1061.500 1041v4M1237.500 1041v4M1343 1041v4M1413.500 1041v4M1589.500 1041v4"/>
<text class="ax" x="147" y="1071" textLength="68" lengthAdjust="spacingAndGlyphs">05:40</text>
<text class="ax" x="323" y="1071" textLength="68" lengthAdjust="spacingAndGlyphs">05:50</text>
<text class="ax" x="496" y="1071" textLength="75" lengthAdjust="spacingAndGlyphs">06:00</text>
<text class="ax" x="676" y="1071" textLength="66" lengthAdjust="spacingAndGlyphs">06:10</text>
<text class="ax" x="852" y="1071" textLength="66" lengthAdjust="spacingAndGlyphs">06:20</text>
<text class="ax" x="1028" y="1071" textLength="67" lengthAdjust="spacingAndGlyphs">06:30</text>
<text class="ax" x="1551" y="1071" textLength="76" lengthAdjust="spacingAndGlyphs">07:00</text>
<rect x="1201" y="1046" width="285" height="33" fill="#f4f400" stroke="#7c939e"/>
<text class="ax" x="1203" y="1072" textLength="280" lengthAdjust="spacingAndGlyphs">Tue 09-Jan-2018 06:46</text>

<!-- bottom bar -->
<rect x="0" y="1081" width="1889" height="48" fill="url(#bot)"/>
<rect x="0" y="1080.500" width="1889" height="1.500" fill="#7c939e"/>
<rect x="-6" y="1090" width="108" height="45" rx="4" fill="#2f95e0"/>
<path d="M13 1100L2 1112 15 1122" stroke="#fff" stroke-width="2" fill="none"/>
<circle cx="13" cy="1100" r="5" fill="#fff"/><circle cx="1" cy="1112" r="5" fill="#fff"/><circle cx="15" cy="1122" r="5" fill="#fff"/>
<text x="27" y="1119" textLength="72" lengthAdjust="spacingAndGlyphs" style="font-weight:bold;font-size:24px" fill="#fff">Share</text>
<rect x="121.500" y="1094" width="16" height="15" rx="7" fill="none" stroke="#000" stroke-width="3"/>
<rect x="120.500" y="1113" width="16" height="22" rx="7" fill="none" stroke="#000" stroke-width="3"/>
<path d="M136 1121h14l-7 7z" fill="#000"/>
<rect x="168" y="1094" width="26" height="32" fill="#fff" stroke="#222" stroke-width="2"/>
<path d="M172 1103h10M174 1109h16M172 1115h16" stroke="#222" stroke-width="4"/>
<path d="M183 1096h10v9z" fill="#f08080"/><path d="M170 1125v-9l10 9z" fill="#30c040"/>
<g stroke="#666" stroke-width="1.500">
<rect x="219" y="1096" width="16" height="6" fill="#40c040"/><rect x="235" y="1096" width="7" height="6" fill="#f08888"/><rect x="223" y="1104" width="13" height="5" fill="#f08888"/><rect x="236" y="1103" width="14" height="7" fill="#f08888"/><rect x="219" y="1110" width="16" height="6" fill="#40c040"/><rect x="225" y="1118" width="11" height="4" fill="#f08888"/><rect x="236" y="1116" width="14" height="6" fill="#f08888"/><rect x="219" y="1123" width="16" height="5" fill="#40c040"/><rect x="235" y="1123" width="6" height="5" fill="#f08888"/>
</g>
<rect x="262" y="1094" width="1427" height="33" rx="4" fill="#9ab6c6" stroke="#7c939e" stroke-width="1.500"/>
<rect x="262" y="1094" width="31" height="33" rx="4" fill="url(#btn)" stroke="#7c939e"/>
<path d="M283 1102v18l-10-9z" fill="#000"/>
<rect x="1657" y="1094" width="32" height="33" rx="4" fill="url(#btn)" stroke="#7c939e"/>
<path d="M1669 1102v18l10-9z" fill="#000"/>
<rect x="1251" y="1094" width="7" height="33" rx="3" fill="#b4cedb" stroke="#7c939e"/>
<path d="M1252 1108h5M1252 1110h5M1252 1112h5" stroke="#fff"/>
<path d="M1724 1090v37" stroke="#666" stroke-width="1.500"/>
<rect x="1717" y="1096" width="13" height="31" fill="#3cc43c" stroke="#666" stroke-width="1.500"/>
<rect x="1700" y="1112" width="11" height="15" fill="#ee8888" stroke="#666" stroke-width="1.500"/>
<path d="M1704 1126l10-11c-2-6 2-12 8-13l-2 6 5 2 4-5c1 7-4 13-11 13l-8 9z" fill="#fff" stroke="#111" stroke-width="1.200"/>
<path d="M1766 1117l9 9" stroke="#000" stroke-width="5"/>
<ellipse cx="1761" cy="1106" rx="11" ry="11" fill="url(#lens)" stroke="#000" stroke-width="1.500"/>
<path d="M1781 1097v19M1777 1101l4-5 4 5M1777 1112l4 5 4-5M1749 1125h17M1753 1121l-5 4 5 4M1762 1121l5 4-5 4" stroke="#0000ee" stroke-width="2" fill="none"/>
<path d="M1821 1118l14 11" stroke="#000" stroke-width="5"/>
<circle cx="1814" cy="1107" r="11" fill="#fff" stroke="#000" stroke-width="2"/>
<path d="M1808 1107h12" stroke="#0000ee" stroke-width="4"/>
<path d="M1872 1118l15 11" stroke="#000" stroke-width="5"/>
<circle cx="1865" cy="1107" r="11" fill="#fff" stroke="#000" stroke-width="2"/>
<path d="M1859 1107h12M1865 1101v12" stroke="#0000ee" stroke-width="4"/>
</svg>
</body>
</html>
